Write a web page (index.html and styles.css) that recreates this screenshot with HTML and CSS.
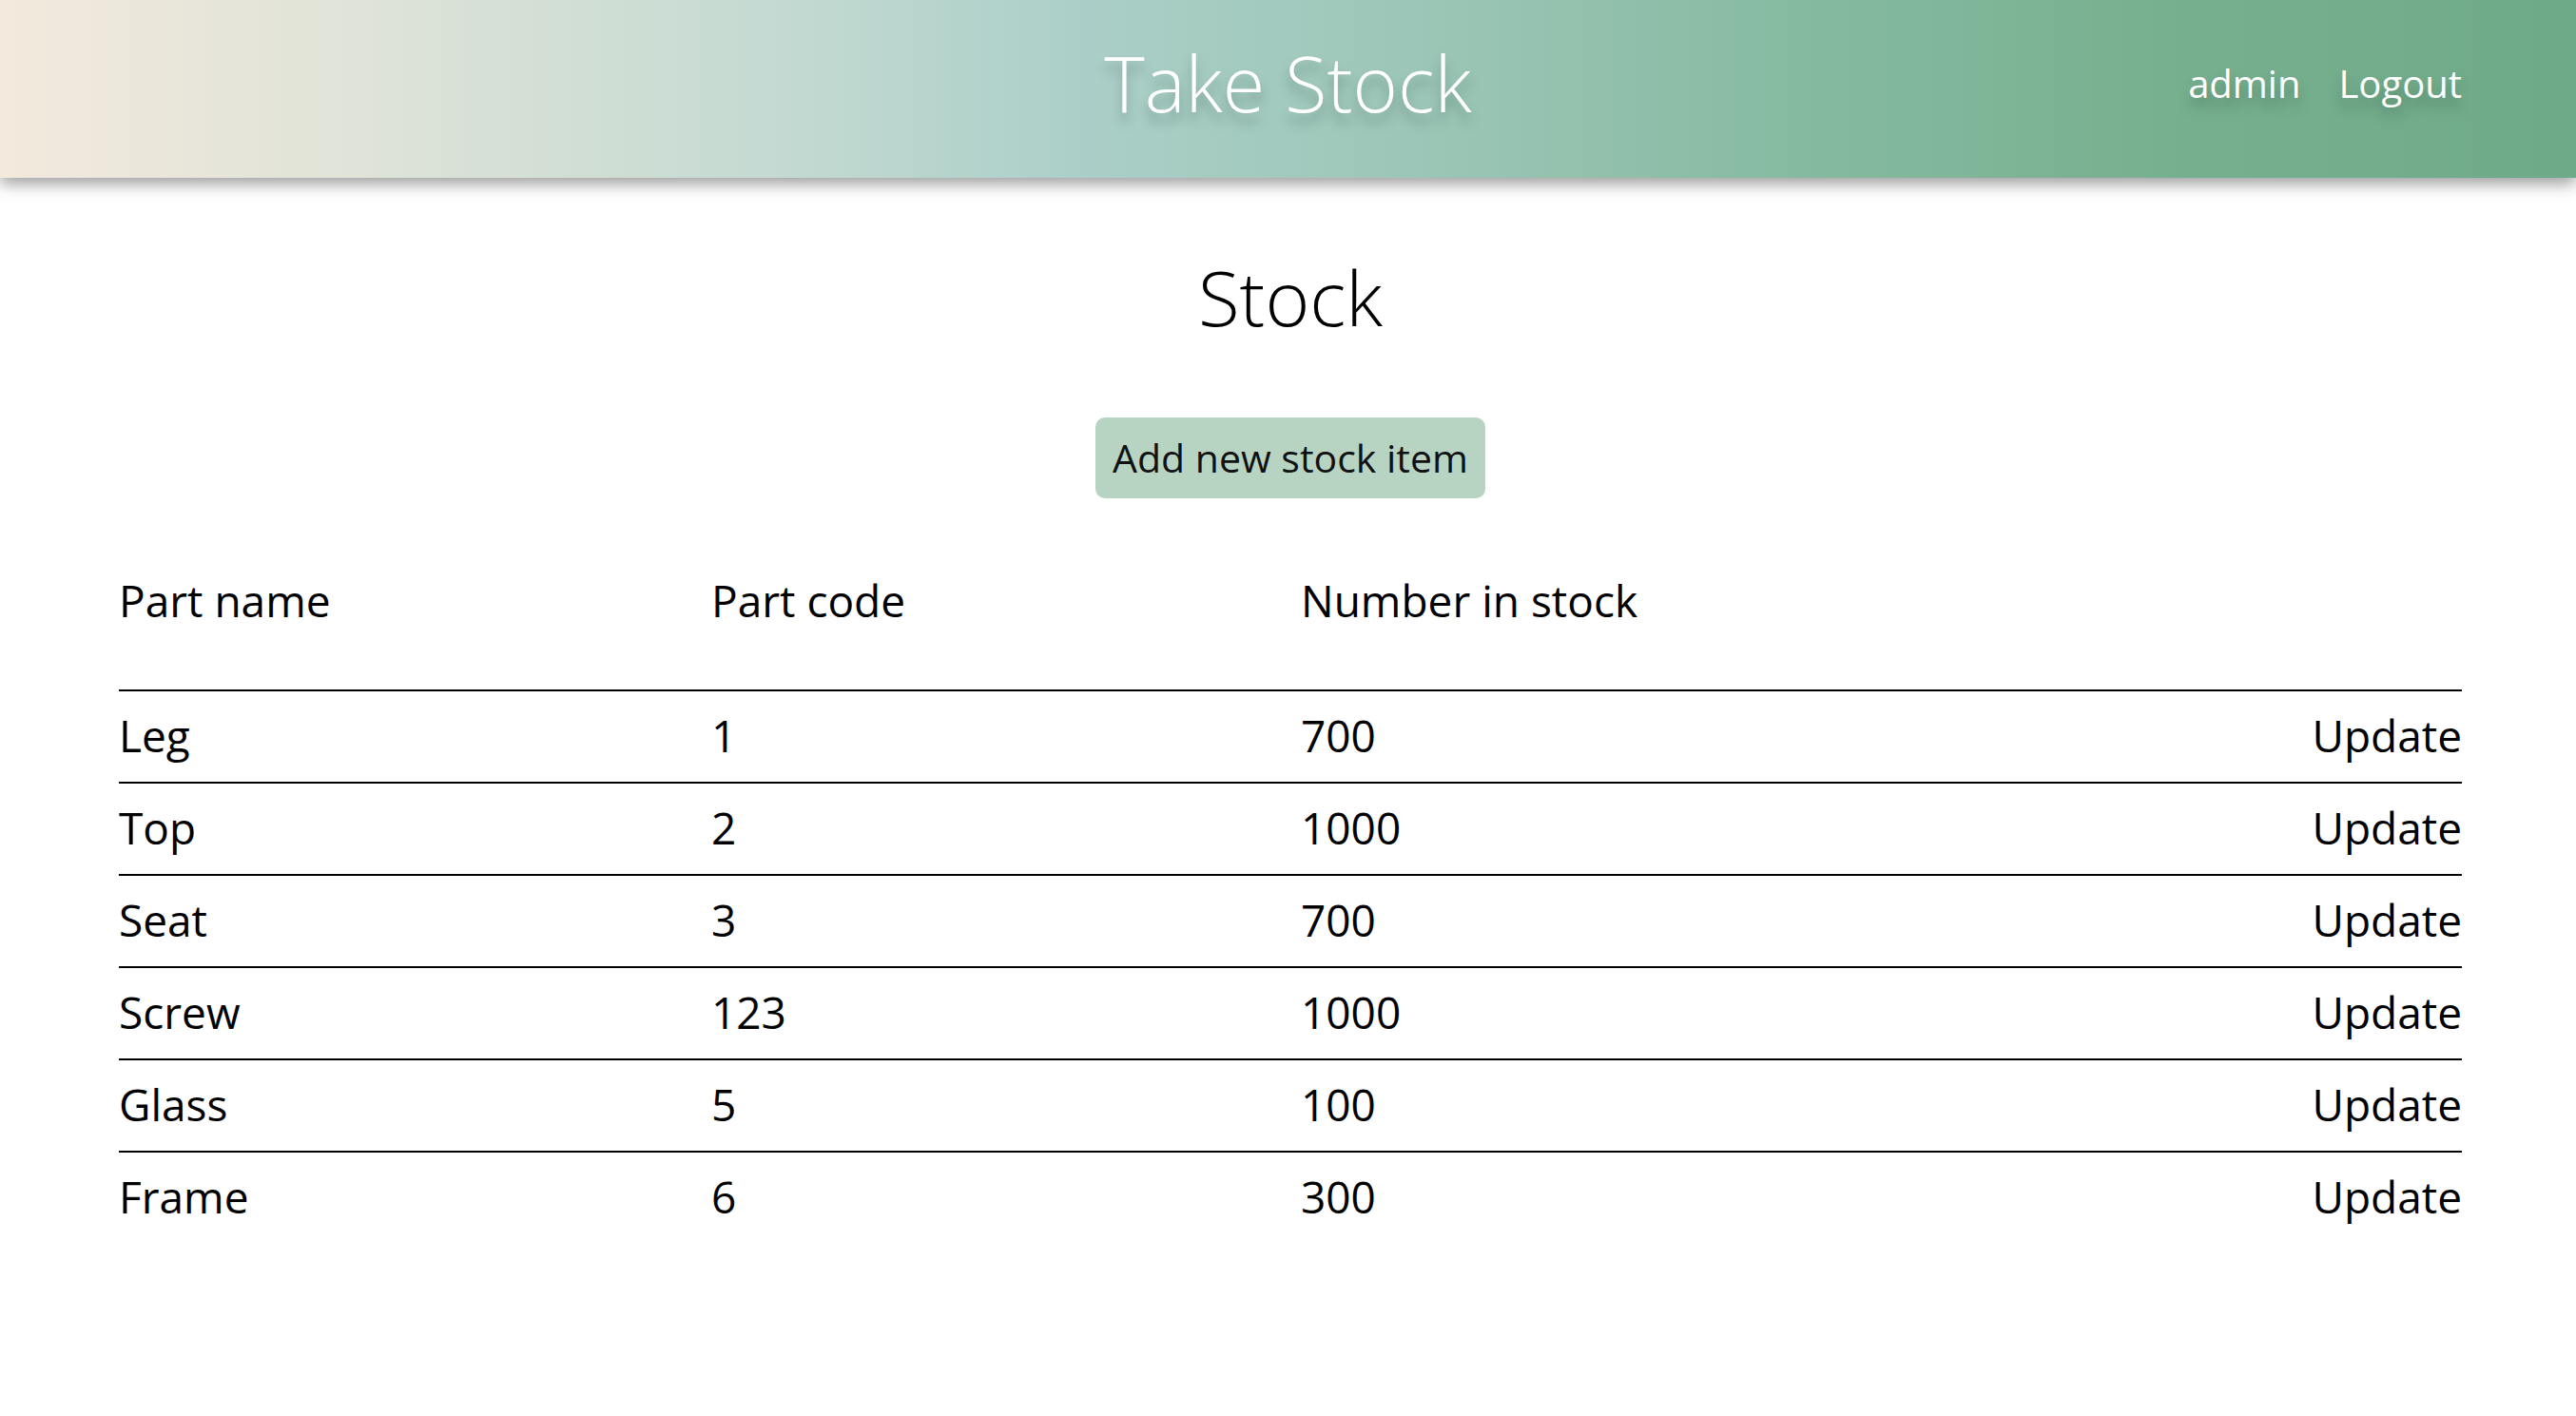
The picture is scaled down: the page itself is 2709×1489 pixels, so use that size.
FILE: index.html
```html
<!DOCTYPE html>
<html lang="en">
<head>
<meta charset="utf-8">
<title>Take Stock</title>
<link rel="stylesheet" href="styles.css">
</head>
<body>
<header class="topbar">
  <div class="topbar-spacer"></div>
  <h1 class="brand">Take Stock</h1>
  <nav class="usernav">
    <a class="usernav-link" href="#">admin</a>
    <a class="usernav-link" href="#">Logout</a>
  </nav>
</header>
<main class="page">
  <h2 class="page-title">Stock</h2>
  <div class="actions">
    <a class="btn" href="#">Add new stock item</a>
  </div>
  <table class="stock-table">
    <thead>
      <tr>
        <th class="col-name">Part name</th>
        <th class="col-code">Part code</th>
        <th class="col-num">Number in stock</th>
        <th class="col-act"></th>
      </tr>
    </thead>
    <tbody>
      <tr><td>Leg</td><td>1</td><td>700</td><td class="act"><a href="#">Update</a></td></tr>
      <tr><td>Top</td><td>2</td><td>1000</td><td class="act"><a href="#">Update</a></td></tr>
      <tr><td>Seat</td><td>3</td><td>700</td><td class="act"><a href="#">Update</a></td></tr>
      <tr><td>Screw</td><td>123</td><td>1000</td><td class="act"><a href="#">Update</a></td></tr>
      <tr><td>Glass</td><td>5</td><td>100</td><td class="act"><a href="#">Update</a></td></tr>
      <tr><td>Frame</td><td>6</td><td>300</td><td class="act"><a href="#">Update</a></td></tr>
    </tbody>
  </table>
</main>
</body>
</html>
```
FILE: styles.css
```css
html, body {
  margin: 0;
  padding: 0;
  background: #ffffff;
}
body {
  font-family: "Open Sans", "Noto Sans", sans-serif;
  font-weight: 400;
  color: #000;
}
a {
  color: inherit;
  text-decoration: none;
}

.topbar {
  box-sizing: border-box;
  height: 187px;
  padding: 32px 120px 0;
  display: grid;
  grid-template-columns: 1fr auto 1fr;
  align-items: start;
  background: linear-gradient(to right, #f3e9dd 0%, #dfe3d8 14%, #c4dad2 30%, #abcfc8 42%, #9cc6b7 55%, #86baa0 70%, #76af8e 85%, #6faa88 100%);
  box-shadow: 0 6px 16px rgba(0, 0, 0, 0.4);
  position: relative;
}
.brand {
  margin: 0;
  font-size: 81px;
  line-height: 110px;
  font-weight: 300;
  color: #fff;
  text-shadow: 0 10px 12px rgba(40, 70, 60, 0.35);
}
.usernav {
  justify-self: end;
  margin-top: 28px;
  display: flex;
  gap: 40px;
  font-size: 40px;
  line-height: 55px;
  color: #fff;
}
.usernav-link {
  text-shadow: 0 10px 12px rgba(40, 70, 60, 0.35);
}

.page {
  padding: 0 120px 0 125px;
}
.page-title {
  margin: 70px 0 0;
  text-align: center;
  font-size: 80px;
  line-height: 109px;
  font-weight: 300;
}
.actions {
  margin-top: 73px;
  display: flex;
  justify-content: center;
}
.btn {
  display: block;
  padding: 14px 18px;
  font-size: 41px;
  line-height: 57px;
  background: #b7d4c3;
  border-radius: 10px;
  color: #111;
}

.stock-table {
  margin-top: 61px;
  width: 100%;
  border-collapse: separate;
  border-spacing: 0;
  font-size: 46px;
}
.stock-table th {
  padding: 0 0 47px;
  line-height: 93px;
  text-align: left;
  font-weight: 400;
}
.col-name { width: 623px; }
.col-code { width: 620px; }
.stock-table td {
  padding: 0 0 2px;
  line-height: 93px;
  border-top: 2px solid #000;
  text-align: left;
}
.stock-table td.act {
  text-align: right;
}
```
